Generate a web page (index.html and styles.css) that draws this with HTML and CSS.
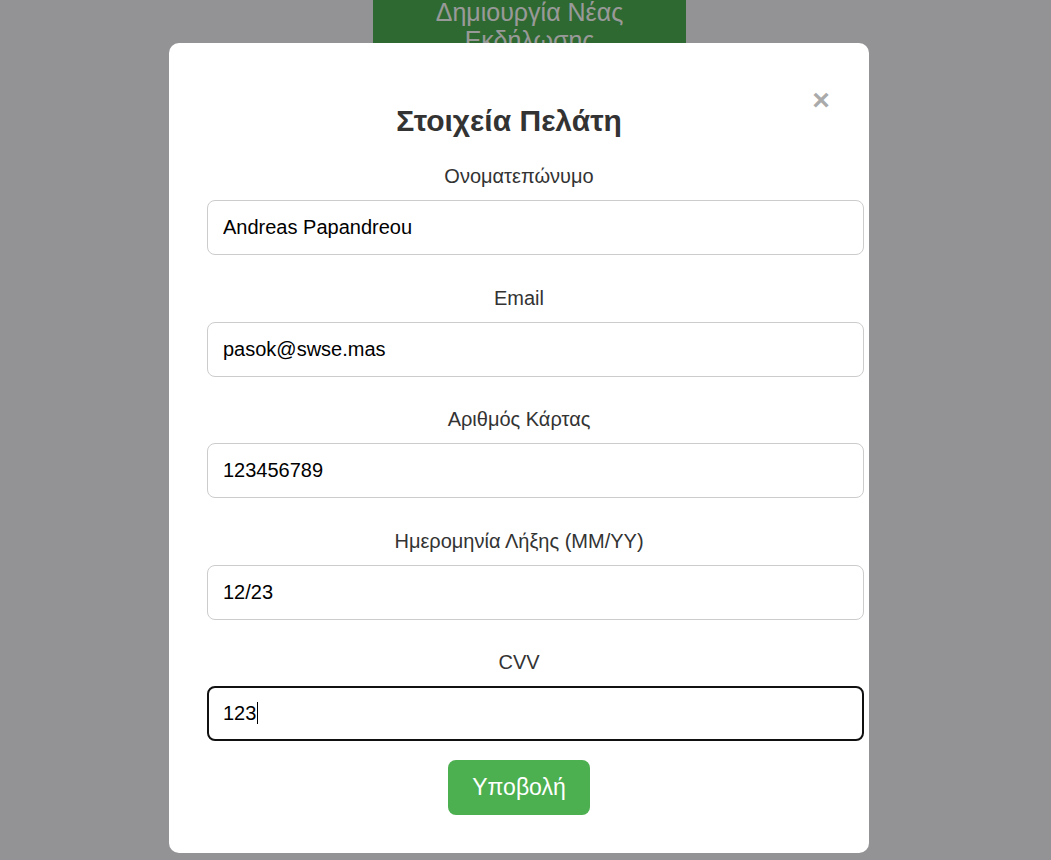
FILE: index.html
```html
<!DOCTYPE html>
<html lang="el">
<head>
<meta charset="utf-8">
<title>Στοιχεία Πελάτη</title>
<link rel="stylesheet" href="styles.css">
</head>
<body>
<div class="page">
  <button class="create-btn" type="button">Δημιουργία Νέας Εκδήλωσης</button>
</div>
<div class="overlay">
  <div class="modal">
    <span class="close">&times;</span>
    <h2 class="title">Στοιχεία Πελάτη</h2>
    <form class="form">
      <div class="fields">
        <div class="field">
          <label class="label" for="name">Ονοματεπώνυμο</label>
          <input class="input" id="name" type="text" value="Andreas Papandreou">
        </div>
        <div class="field">
          <label class="label" for="email">Email</label>
          <input class="input" id="email" type="text" value="pasok@swse.mas">
        </div>
        <div class="field">
          <label class="label" for="card">Αριθμός Κάρτας</label>
          <input class="input" id="card" type="text" value="123456789">
        </div>
        <div class="field">
          <label class="label" for="exp">Ημερομηνία Λήξης (MM/YY)</label>
          <input class="input" id="exp" type="text" value="12/23">
        </div>
        <div class="field">
          <label class="label" for="cvv">CVV</label>
          <div class="input-wrap">
            <input class="input input-focused" id="cvv" type="text" value="123">
            <span class="caret"></span>
          </div>
        </div>
      </div>
      <div class="actions">
        <button class="submit" type="button">Υποβολή</button>
      </div>
    </form>
  </div>
</div>
</body>
</html>
```
FILE: styles.css
```css
html, body {
  margin: 0;
  padding: 0;
}
body {
  background: #f5f5fb;
  font-family: "Liberation Sans", Arial, sans-serif;
  width: 1051px;
  height: 860px;
  overflow: hidden;
}
.page {
  display: flex;
  justify-content: center;
  padding-left: 8px;
}
.create-btn {
  margin-top: -14px;
  width: 313px;
  padding: 12px 20px;
  background: #4caf50;
  color: #fff;
  border: none;
  font-family: "Liberation Sans", Arial, sans-serif;
  font-size: 25px;
  line-height: 28px;
}
.overlay {
  position: fixed;
  inset: 0;
  background: rgba(0, 0, 0, 0.4);
  display: flex;
  justify-content: center;
  align-items: flex-start;
  padding-right: 13px;
}
.modal {
  position: relative;
  margin-top: 43px;
  width: 624px;
  padding: 0 38px 38px;
  background: #fff;
  border-radius: 10px;
  color: #333;
}
.close {
  float: right;
  margin-top: 42px;
  margin-right: 0;
  color: #aaa;
  font-size: 30px;
  font-weight: bold;
  line-height: 30px;
  width: 20px;
  text-align: center;
}
.title {
  margin: 0;
  padding-top: 61px;
  text-align: center;
  font-size: 30px;
  line-height: 34px;
  font-weight: bold;
  color: #333;
}
.form {
  margin-top: 27px;
}
.fields {
  display: flex;
  flex-direction: column;
  gap: 31.5px;
}
.field {
  display: flex;
  flex-direction: column;
  gap: 12px;
}
.label {
  text-align: center;
  font-size: 20px;
  line-height: 23px;
  color: #333;
}
.input {
  display: block;
  width: 625px;
  height: 23px;
  padding: 15px;
  border: 1px solid #ccc;
  border-radius: 8px;
  font-family: "Liberation Sans", Arial, sans-serif;
  font-size: 20px;
  color: #000;
  background: #fff;
  outline: none;
}
.input-wrap {
  position: relative;
}
.input-focused {
  border: 2px solid #111;
  padding: 14px;
}
.caret {
  position: absolute;
  left: 50px;
  top: 16px;
  width: 1px;
  height: 22px;
  background: #000;
}
.actions {
  display: flex;
  justify-content: center;
  margin-top: 19px;
}
.submit {
  background: #4caf50;
  color: #fff;
  border: none;
  border-radius: 8px;
  width: 142px;
  height: 55px;
  font-family: "Liberation Sans", Arial, sans-serif;
  font-size: 23px;
}
```
